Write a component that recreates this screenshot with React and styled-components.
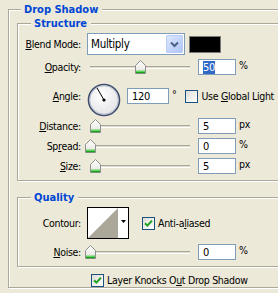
import React from 'react';
import styled, { createGlobalStyle } from 'styled-components';

const GlobalStyle = createGlobalStyle`
  html, body {
    margin: 0;
    background: #ece9d8;
    overflow: hidden;
  }
  body {
    font-family: "DejaVu Sans Condensed", "Liberation Sans", sans-serif;
    font-size: 10.5px;
    line-height: 13px;
    letter-spacing: -0.3px;
    color: #000;
  }
`;

const Page = styled.div`
  width: 278px;
  height: 293px;
  padding: 9px 0 0 8px;
  box-sizing: border-box;
`;

const Group = styled.div`
  position: relative;
  width: ${p => p.$width}px;
  border: 1px solid #aca899;
  box-shadow: inset 1px 1px 0 #fff, 1px 1px 0 #fff;
  padding: ${p => p.$pad};
  margin-top: ${p => p.$top || 0}px;
  box-sizing: border-box;
`;

const Legend = styled.span`
  position: absolute;
  top: -7px;
  left: ${p => p.$left}px;
  padding: 0 4px 0 3px;
  background: #ece9d8;
  color: #0046d5;
  font-size: 11px;
  font-weight: bold;
  letter-spacing: 0;
`;

const Row = styled.div`
  display: flex;
  align-items: ${p => p.$align || 'center'};
  height: ${p => p.$h}px;
  margin-top: ${p => p.$top || 0}px;
`;

const Label = styled.div`
  width: 63px;
  flex-shrink: 0;
  margin-right: 6px;
  text-align: right;
  white-space: nowrap;
  margin-top: ${p => p.$top || 0}px;
`;

const Select = styled.div`
  display: flex;
  width: 98px;
  height: 22px;
  box-sizing: border-box;
  border: 1px solid #7f9db9;
  background: #fff;
`;

const SelectText = styled.div`
  flex: 1;
  padding: 4px 0 0 3px;
  font-size: 11.5px;
`;

const SelectButton = styled.div`
  width: 15px;
  margin: 1px;
  border: 1px solid #b9cdf8;
  border-radius: 1px;
  background: linear-gradient(135deg, #dce6fd 0%, #c1d3fb 60%, #b1c6f7 100%);
  display: flex;
  align-items: center;
  justify-content: center;
`;

const Swatch = styled.div`
  width: 32px;
  height: 17px;
  margin-left: 4px;
  box-sizing: border-box;
  border: 1px solid #7a7a7a;
  background: #000;
`;

const SliderBox = styled.div`
  position: relative;
  width: 108px;
  height: 16px;
  margin-left: -1px;
  flex-shrink: 0;
`;

const Track = styled.div`
  position: absolute;
  left: 4px;
  right: 4px;
  top: 7px;
  height: 1px;
  border-top: 1px solid #aca899;
  border-bottom: 1px solid #fff;
  background: #dedbcd;
`;

const ThumbWrap = styled.div`
  position: absolute;
  top: 1px;
  width: 11px;
  height: 14px;
`;

const Input = styled.div`
  width: ${p => p.$w || 38}px;
  height: 16px;
  margin-left: ${p => p.$ml ?? 4}px;
  box-sizing: border-box;
  border: 1px solid #7f9db9;
  background: #fff;
  padding: 1px 0 0 4px;
  font-size: 11px;
  flex-shrink: 0;
`;

const Selected = styled.span`
  background: #316ac5;
  color: #fff;
`;

const Unit = styled.span`
  margin-left: 3px;
  align-self: flex-start;
`;

const Fields = styled.div`
  display: flex;
  align-items: center;
  margin-top: 5px;
  height: 16px;
`;

const Dial = styled.svg`
  display: block;
  width: 34px;
  height: 34px;
  margin-right: 6px;
`;

const Box = styled.span`
  display: inline-flex;
  align-items: center;
  justify-content: center;
  width: 13px;
  height: 13px;
  box-sizing: border-box;
  border: 1px solid #1c5180;
  background: linear-gradient(135deg, #dcdcd7 0%, #f5f5f3 70%, #fff 100%);
  flex-shrink: 0;
`;

const Check = styled.label`
  display: flex;
  align-items: center;
  margin-left: ${p => p.$ml || 0}px;
  white-space: nowrap;
`;

const CheckText = styled.span`
  margin-left: 3px;
`;

const Contour = styled.div`
  display: flex;
  width: 42px;
  height: 32px;
  box-sizing: border-box;
  border: 1px solid #000;
  background: #fff;
`;

const ContourArrow = styled.div`
  width: 10px;
  background: #fff;
  display: flex;
  justify-content: center;
  padding-top: 12px;
  box-sizing: border-box;
`;

const KnockRow = styled.div`
  display: flex;
  margin: 7px 0 0 74px;
`;

const Thumb = ({ pos }) => (
  <ThumbWrap style={{ left: `${pos - 5}px` }}>
    <svg width="11" height="14" viewBox="0 0 11 14">
      <defs>
        <linearGradient id="tg" x1="0" y1="0" x2="0" y2="1">
          <stop offset="0" stopColor="#ffffff" />
          <stop offset="1" stopColor="#e4e3dc" />
        </linearGradient>
      </defs>
      <polygon points="0.5,5.5 5.5,0.5 10.5,5.5 10.5,13.5 0.5,13.5" fill="url(#tg)" stroke="#8e8f8f" />
      <rect x="1" y="10.5" width="9" height="1.5" fill="#5ed35e" />
      <rect x="1" y="12" width="9" height="1.2" fill="#21a121" />
    </svg>
  </ThumbWrap>
);

const Slider = ({ value }) => (
  <SliderBox>
    <Track />
    <Thumb pos={4 + value} />
  </SliderBox>
);

const CheckMark = () => (
  <svg width="9" height="9" viewBox="0 0 9 9">
    <path d="M1 4.2 L3.4 6.6 L8 1.6" fill="none" stroke="#21a121" strokeWidth="2" />
  </svg>
);

const SliderRow = ({ label, value, text, unit, top }) => (
  <Row $h={16} $top={top}>
    <Label>{label}</Label>
    <Slider value={value} />
    <Input>{text}</Input>
    <Unit>{unit}</Unit>
  </Row>
);

export default function App() {
  return (
    <Page>
      <GlobalStyle />
      <Group $width={330} $pad="13px 0 0 8px">
        <Legend $left={12}>Drop Shadow</Legend>

        <Group $width={330} $pad="9px 0 6px 0">
          <Legend $left={13}>Structure</Legend>
          <Row $h={22}>
            <Label><u>B</u>lend Mode:</Label>
            <Select>
              <SelectText>Multiply</SelectText>
              <SelectButton>
                <svg width="9" height="7" viewBox="0 0 9 7">
                  <path d="M1 1.5 L4.5 5 L8 1.5" fill="none" stroke="#4d6185" strokeWidth="2" />
                </svg>
              </SelectButton>
            </Select>
            <Swatch />
          </Row>
          <Row $h={16} $top={4}>
            <Label><u>O</u>pacity:</Label>
            <Slider value={50} />
            <Input><Selected>50</Selected></Input>
            <Unit>%</Unit>
          </Row>
          <Row $h={33} $top={8} $align="flex-start">
            <Label $top={7}><u>A</u>ngle:</Label>
            <Dial viewBox="0 0 34 34">
              <defs>
                <radialGradient id="dg" cx="0.4" cy="0.35" r="0.7">
                  <stop offset="0" stopColor="#ffffff" />
                  <stop offset="1" stopColor="#e2e2e6" />
                </radialGradient>
              </defs>
              <circle cx="17" cy="17" r="15.5" fill="url(#dg)" stroke="#3f4c6b" strokeWidth="1.6" />
              <circle cx="17" cy="17" r="14.3" fill="none" stroke="#a7b0c4" strokeWidth="0.8" />
              <line x1="17" y1="17" x2="10" y2="4.9" stroke="#000" strokeWidth="1" />
              <circle cx="17" cy="17" r="1.6" fill="#000" />
            </Dial>
            <Fields>
              <Input $w={42} $ml={0}>120</Input>
              <Unit>°</Unit>
              <Check $ml={9}>
                <Box />
                <CheckText>Use <u>G</u>lobal Light</CheckText>
              </Check>
            </Fields>
          </Row>
          <SliderRow label={<><u>D</u>istance:</>} value={5} text="5" unit="px" top={2} />
          <SliderRow label={<>Sp<u>r</u>ead:</>} value={0} text="0" unit="%" top={4} />
          <SliderRow label={<><u>S</u>ize:</>} value={5} text="5" unit="px" top={4} />
        </Group>

        <Group $width={330} $top={16} $pad="9px 0 6px 0">
          <Legend $left={13}>Quality</Legend>
          <Row $h={32}>
            <Label>Contour:</Label>
            <Contour>
              <svg width="30" height="30" viewBox="0 0 30 30">
                <polygon points="0,30 30,0 30,30" fill="#aca899" />
              </svg>
              <ContourArrow>
                <svg width="5" height="3" viewBox="0 0 5 3">
                  <polygon points="0,0 5,0 2.5,3" fill="#000" />
                </svg>
              </ContourArrow>
            </Contour>
            <Check $ml={13}>
              <Box><CheckMark /></Box>
              <CheckText>Anti-a<u>l</u>iased</CheckText>
            </Check>
          </Row>
          <SliderRow label={<><u>N</u>oise:</>} value={0} text="0" unit="%" top={5} />
        </Group>

        <KnockRow>
          <Check>
            <Box><CheckMark /></Box>
            <CheckText>Layer Knocks O<u>u</u>t Drop Shadow</CheckText>
          </Check>
        </KnockRow>
      </Group>
    </Page>
  );
}
